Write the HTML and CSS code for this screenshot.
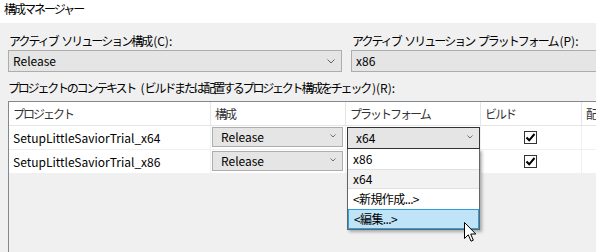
FILE: index.html
```html
<!DOCTYPE html>
<html lang="ja">
<head>
  <meta charset="UTF-8">
  <title>構成マネージャー</title>
  <link rel="stylesheet" href="styles.css">
</head>
<body>

<div class="titlebar jp">構成マネージャー</div>

<div class="top">
  <div class="field field-config">
    <div class="label jp">アクティブ ソリューション構成<span class="lat">(C):</span></div>
    <div class="combo">
      <span>Release</span>
      <svg class="chev" width="8" height="5" viewBox="0 0 8 5"><path d="M0.5 0.5 L4 4 L7.5 0.5" fill="none" stroke="#606060" stroke-width="1"/></svg>
    </div>
  </div>
  <div class="field field-platform">
    <div class="label jp">アクティブ ソリューション プラットフォーム<span class="lat">(P):</span></div>
    <div class="combo">
      <span>x86</span>
    </div>
  </div>
</div>

<div class="label context jp">プロジェクトのコンテキスト <span class="lat">(</span>ビルドまたは配置するプロジェクト構成をチェック<span class="lat">)(R):</span></div>

<div class="grid">
  <div class="row head">
    <div class="cell c-proj"><span class="jp">プロジェクト</span></div>
    <div class="cell c-conf"><span class="jp">構成</span></div>
    <div class="cell c-plat"><span class="jp">プラットフォーム</span></div>
    <div class="cell c-build"><span class="jp">ビルド</span></div>
    <div class="cell c-deploy"><span class="jp">配置</span></div>
  </div>

  <div class="row">
    <div class="cell c-proj">SetupLittleSaviorTrial_x64</div>
    <div class="cell c-conf">
      <div class="combo small">
        <span>Release</span>
        <svg class="chev" width="6" height="4" viewBox="0 0 6 4"><path d="M0.5 0.5 L3 3 L5.5 0.5" fill="none" stroke="#707070" stroke-width="1"/></svg>
      </div>
    </div>
    <div class="cell c-plat open">
      <div class="combo small focus">
        <span>x64</span>
        <svg class="chev" width="6" height="4" viewBox="0 0 6 4"><path d="M0.5 0.5 L3 3 L5.5 0.5" fill="none" stroke="#707070" stroke-width="1"/></svg>
      </div>
      <div class="dropdown">
        <div class="item">x86</div>
        <div class="item current">x64</div>
        <div class="item"><span class="jp-item">&lt;新規作成...&gt;</span></div>
        <div class="item hover"><span class="jp-item">&lt;編集...&gt;</span></div>
      </div>
      <svg class="cursor" width="13" height="21" viewBox="0 0 13 21">
        <path d="M0.5 0.5 L0.5 16.5 L4.3 12.8 L7 19.2 L9.3 18.2 L6.7 12 L11.8 12 Z" fill="#fff" stroke="#000" stroke-width="1"/>
      </svg>
    </div>
    <div class="cell c-build"><span class="check">
      <svg width="11" height="11" viewBox="0 0 11 11"><path d="M1.5 5.5 L4.2 8.3 L9.5 2" fill="none" stroke="#000" stroke-width="2"/></svg>
    </span></div>
    <div class="cell c-deploy"></div>
  </div>

  <div class="row">
    <div class="cell c-proj">SetupLittleSaviorTrial_x86</div>
    <div class="cell c-conf">
      <div class="combo small">
        <span>Release</span>
        <svg class="chev" width="6" height="4" viewBox="0 0 6 4"><path d="M0.5 0.5 L3 3 L5.5 0.5" fill="none" stroke="#707070" stroke-width="1"/></svg>
      </div>
    </div>
    <div class="cell c-plat"></div>
    <div class="cell c-build"><span class="check">
      <svg width="11" height="11" viewBox="0 0 11 11"><path d="M1.5 5.5 L4.2 8.3 L9.5 2" fill="none" stroke="#000" stroke-width="2"/></svg>
    </span></div>
    <div class="cell c-deploy"></div>
  </div>
</div>

</body>
</html>
```

FILE: styles.css
```css
body {
  margin: 0;
  width: 596px;
  height: 252px;
  overflow: hidden;
  background: #f0f0f0;
  font-family: "Noto Sans CJK JP", "Noto Sans", sans-serif;
  font-size: 12px;
  color: #000;
}
.jp {
  letter-spacing: -2px;
  word-spacing: 3px;
  white-space: nowrap;
}
.lat {
  letter-spacing: 0;
  padding-left: 2px;
}
.jp-item {
  letter-spacing: -0.6px;
}
.titlebar {
  height: 23px;
  background: #fff;
  padding-left: 4px;
  line-height: 18px;
}
.top {
  display: flex;
  gap: 9px;
  padding: 9px 0 0 8px;
}
.field-config {
  width: 334px;
  flex: none;
}
.field-platform {
  width: 260px;
  flex: none;
}
.label {
  line-height: 18px;
  height: 18px;
  padding-left: 1px;
}
.combo {
  display: flex;
  align-items: center;
  justify-content: space-between;
  height: 20px;
  border: 1px solid #adadad;
  background: #e5e5e5;
  padding: 0 6px 0 4px;
}
.combo span {
  line-height: 18px;
}
.context {
  margin: 7px 0 0 8px;
  padding-left: 0;
  letter-spacing: -2.2px;
}
.grid {
  margin: 4px 0 0 8px;
  border-top: 1px solid #828790;
  border-left: 1px solid #828790;
  height: 160px;
}
.row {
  display: flex;
  height: 23px;
  border-bottom: 1px solid #f0f0f0;
  background: #fff;
}
.row.head {
  border-bottom: 1px solid #e5e5e5;
}
.cell {
  flex: none;
  box-sizing: border-box;
  border-right: 1px solid #f0f0f0;
  line-height: 23px;
  padding-left: 4px;
  white-space: nowrap;
  overflow: hidden;
}
.head .cell {
  border-right: 1px solid #e5e5e5;
  color: #333;
}
.c-proj { width: 202px; }
.c-conf { width: 135px; padding: 1px 0 0 1px; }
.c-plat { width: 135px; padding: 1px 0 0 1px; }
.c-build { width: 101px; }
.c-deploy { width: 20px; border-right: none; }
.head .c-conf, .head .c-plat { padding: 0 0 0 4px; }
.c-build {
  display: flex;
  align-items: center;
  justify-content: center;
  padding: 0 2px 0 0;
}
.head .c-build {
  display: block;
  padding-left: 4px;
}
.combo.small {
  height: 20px;
  width: 131px;
  box-sizing: border-box;
  padding: 0 6px 0 8px;
}
.combo.small .chev {
  margin-top: -2px;
}
.combo.focus {
  width: 133px;
  height: 22px;
  border-color: #333;
}
.cell.open {
  overflow: visible;
  position: relative;
}
.dropdown {
  position: absolute;
  left: 1px;
  top: 23px;
  width: 133px;
  box-sizing: border-box;
  background: #fff;
  border: 1px solid #646464;
  border-top: none;
  box-shadow: 2px 2px 3px rgba(0, 0, 0, 0.3);
  z-index: 2;
}
.item {
  height: 20px;
  line-height: 20px;
  padding-left: 5px;
  box-sizing: border-box;
}
.item.current {
  background: #f2f2f2;
  border-top: 1px solid #e0e0e0;
  border-bottom: 1px solid #e0e0e0;
  line-height: 18px;
}
.item.hover {
  background: #bfe3f7;
  border: 1px solid #2f9ee0;
  line-height: 18px;
}
.cursor {
  position: absolute;
  left: 118px;
  top: 96px;
  z-index: 3;
}
.check {
  width: 13px;
  height: 13px;
  box-sizing: border-box;
  border: 1px solid #333;
  background: #fff;
  display: flex;
  align-items: center;
  justify-content: center;
}
```
